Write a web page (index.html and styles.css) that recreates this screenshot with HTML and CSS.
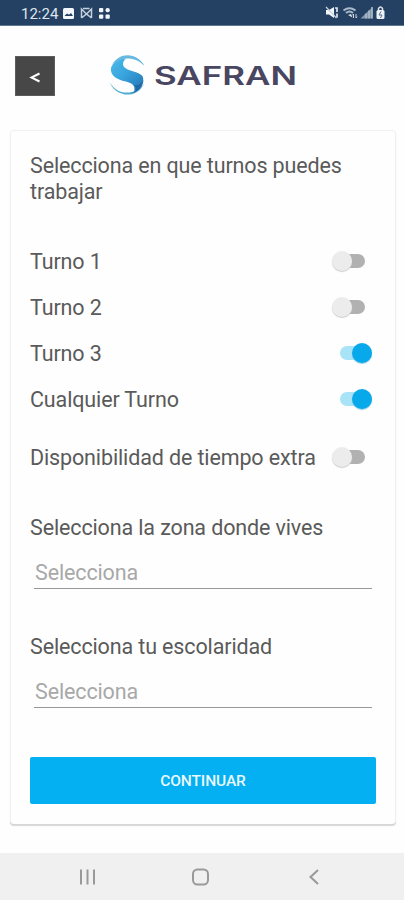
FILE: index.html
```html
<!DOCTYPE html>
<html lang="es">
<head>
<meta charset="utf-8">
<title>Safran - Turnos</title>
<link rel="stylesheet" href="styles.css">
</head>
<body>
<div class="status">
  <span class="clock">12:24</span>
  <svg class="status-left" width="50" height="14" viewBox="0 0 50 14">
    <rect x="1" y="2" width="11" height="11" rx="1.5" fill="#f4f7fa"/>
    <path d="M2.500 10l2.500-2.500 2 1.200 2-1.700 2 3z" fill="#244062"/>
    <path d="M19.500 12V3l5 5 5-5v9M19.500 12l5-4 5 4M21 2.500h6.500" fill="none" stroke="#c5d0dd" stroke-width="1.500"/>
    <g fill="#f4f7fa"><rect x="37" y="2" width="4.300" height="4.300" rx="1"/><rect x="43.500" y="2" width="4.300" height="4.300" rx="2"/><rect x="37" y="8.500" width="4.300" height="4.300" rx="1"/><rect x="43.500" y="8.500" width="4.300" height="4.300" rx="1"/></g>
  </svg>
  <svg class="status-right" width="62" height="15" viewBox="0 0 62 15">
    <path d="M1 5h3l5-3v11l-5-3.500H1z" fill="#f1f5f9"/>
    <path d="M1 2l10.500 11" stroke="#c9d4df" stroke-width="1.200"/>
    <path d="M10 3h2v4M12 8.500v4" fill="none" stroke="#dce4ec" stroke-width="1.700"/>
    <path d="M18.500 5.500q6-4.500 12 0M21 8q3.500-3 7 0" fill="none" stroke="#a9bacb" stroke-width="2"/>
    <path d="M23 10l3-1 1.500 3.500z" fill="#dce4ec"/>
    <path d="M28.500 13V9l-1 1.300M31 9v4l1.200-1.300" stroke="#c9d4df" fill="none"/>
    <path d="M35.500 13.500L47.500 2v11.500z" fill="#8398af"/>
    <path d="M41 13.500v-5M44 13.500v-8M47 13.500V2" stroke="#adbccb" stroke-width="1.500"/>
    <path d="M53.500 5V3.500q2-3 4 0V5" fill="none" stroke="#dce4ec" stroke-width="1.500"/>
    <rect x="51.500" y="5" width="8" height="9" rx="1.500" fill="#eef2f6"/>
    <path d="M56 6.500l-2 3.500h3l-1.500 3" fill="none" stroke="#52708c"/>
  </svg>
</div>

<header class="header">
  <button class="back" aria-label="Atrás"><svg width="12" height="14" viewBox="0 0 12 14"><path d="M10.500 2.500L2.500 6.500l8 4" fill="none" stroke="#fff" stroke-width="2"/></svg></button>
  <svg class="logo" width="196" height="44" viewBox="0 0 196 44">
    <defs>
      <linearGradient id="wave" x1="0" y1="0" x2="1" y2="1">
        <stop offset="0" stop-color="#4dbbe9"/><stop offset=".45" stop-color="#38a4dd"/><stop offset="1" stop-color="#2474b4"/>
      </linearGradient>
    </defs>
    <path d="M3 14C5 8 11 4 18 4.500C14 8 14 12 18 14.500C22 17 31 18 34.500 22C37 27 33 34 26 37C28 32 24 29 18 27.500C8 25.500 2 21 3 14Z" fill="url(#wave)"/>
    <path d="M4 11C11-2 29-2 36.500 12C29 4.500 20 3 12 6C8 7.500 6 9 4 11Z" fill="#66b9df"/>
    <path d="M1.500 28C8 44 30 45 36 29.500C31 37 24 39 17 38.500C10 38 5 34 1.500 28Z" fill="#50abd0"/>
    <path d="M26 31C29 34 28 37 24 39C30 38 35 33 35.500 26C33 30 30 32 26 31Z" fill="#2069a3"/>
    <text class="wordmark" x="46" y="30.500" textLength="143" lengthAdjust="spacingAndGlyphs">SAFRAN</text>
  </svg>
</header>

<main class="card">
  <h1 class="title">Selecciona en que turnos puedes<br>trabajar</h1>
  <div class="row"><span>Turno 1</span><i class="switch"></i></div>
  <div class="row"><span>Turno 2</span><i class="switch"></i></div>
  <div class="row"><span>Turno 3</span><i class="switch on"></i></div>
  <div class="row"><span>Cualquier Turno</span><i class="switch on"></i></div>
  <div class="row extra"><span>Disponibilidad de tiempo extra</span><i class="switch"></i></div>
  <div class="label">Selecciona la zona donde vives</div>
  <div class="select">Selecciona</div>
  <div class="label second">Selecciona tu escolaridad</div>
  <div class="select">Selecciona</div>
  <button class="continue">CONTINUAR</button>
</main>

<nav class="nav">
  <svg width="20" height="20" viewBox="0 0 20 20"><path d="M3 2.500v15M9.500 2.500v15M16 2.500v15" stroke="#999" stroke-width="2"/></svg>
  <svg width="20" height="20" viewBox="0 0 20 20"><rect x="2" y="2.500" width="15" height="15" rx="4.500" fill="none" stroke="#999" stroke-width="2"/></svg>
  <svg width="20" height="20" viewBox="0 0 20 20"><path d="M14 3L6.500 10l7.500 7" fill="none" stroke="#999" stroke-width="2"/></svg>
</nav>
</body>
</html>
```
FILE: styles.css
```css
* { box-sizing: border-box; }
body {
  margin: 0;
  width: 404px;
  height: 900px;
  display: flex;
  flex-direction: column;
  overflow: hidden;
  background: #fefefe;
  color: #5a5a5a;
  font-family: Roboto, "Liberation Sans", sans-serif;
}
.status {
  height: 26px;
  flex: none;
  display: flex;
  align-items: center;
  padding: 0 17px 0 21px;
  background: #244062;
  border-bottom: 1px solid #5f7690;
}
.clock { width: 41px; color: #dde5ed; font-size: 15px; line-height: 26px; padding-top: 2px; white-space: nowrap; }
.status-left { display: block; }
.status-right { display: block; margin-left: auto; }
.header {
  height: 104px;
  flex: none;
  display: flex;
  align-items: flex-start;
  padding: 28px 0 0 15px;
}
.back {
  display: flex;
  align-items: center;
  justify-content: center;
  width: 40px;
  height: 40px;
  margin-top: 2px;
  padding: 3px 0 0;
  border: 1px solid #5c5c5c;
  background: #474747;
}
.logo { display: block; margin-left: 53px; }
.wordmark { font: 600 25.500px Inter, "Liberation Sans", sans-serif; fill: #484660; }
.card {
  flex: none;
  width: 386px;
  height: 694px;
  margin-left: 10px;
  padding: 22px 20px 0 19px;
  border: 1px solid #f0f0f0;
  border-width: 1px 1px 0;
  border-radius: 4px;
  background: #fefefe;
  box-shadow: 0 2px 1px #d6d6d6;
  font-size: 21.500px;
  letter-spacing: -.13px;
}
.title { margin: 0 0 34px; font-size: inherit; font-weight: 400; line-height: 25.500px; white-space: nowrap; }
.row {
  height: 46px;
  display: flex;
  align-items: center;
  justify-content: space-between;
  white-space: nowrap;
}
.extra { margin-top: 12px; }
.switch {
  position: relative;
  flex: none;
  width: 32px;
  height: 14px;
  margin-right: 10px;
  border-radius: 7px;
  background: linear-gradient(90deg, transparent 40%, #b1b1b1 40%);
}
.switch::before {
  content: "";
  position: absolute;
  left: -1px;
  top: -3px;
  width: 20px;
  height: 20px;
  border-radius: 50%;
  background: #ececec;
  box-shadow: 0 1px 1px #ccc;
}
.switch.on { margin-right: 3px; background: #a9e3f8; }
.switch.on::before { left: 12px; background: #08a9ea; box-shadow: 0 1px 1px #8bcde5; }
.label { margin-top: 34px; line-height: 28px; white-space: nowrap; }
.select {
  height: 33px;
  margin: 14px 3px 0 4px;
  padding-left: 1px;
  border-bottom: 1px solid #999;
  color: #a8a8a8;
  line-height: 34px;
}
.label.second { margin-top: 44px; }
.continue {
  display: block;
  width: 346px;
  height: 47px;
  margin: 49px 0 0;
  padding: 0;
  border: 0;
  border-radius: 2px;
  background: #04aff2;
  color: #e9f9ff;
  font: 500 15.500px Roboto, sans-serif;
  letter-spacing: -.1px;
}
.nav {
  height: 47px;
  flex: none;
  margin-top: auto;
  display: flex;
  justify-content: space-between;
  align-items: center;
  padding: 1px 80px 0 78px;
  background: #f0f0f0;
}
```
